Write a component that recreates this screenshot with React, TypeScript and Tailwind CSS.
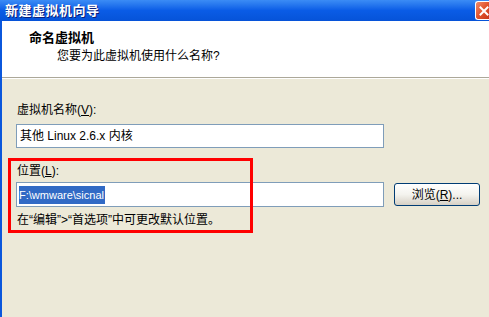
import React from "react";

const font = { fontFamily: '"Liberation Sans", "Noto Sans CJK SC", sans-serif' };

function CloseButton() {
  return (
    <div className="absolute right-0 top-[1px] w-[14px] h-[19px] rounded-l-[3px] border border-r-0 border-white bg-gradient-to-br from-[#f08a6a] via-[#e2542d] to-[#c8361a] flex items-center justify-center">
      <svg width="10" height="10" viewBox="0 0 10 10" className="ml-[2px]">
        <path d="M1.5 1.5 L8.5 8.5 M8.5 1.5 L1.5 8.5" stroke="white" strokeWidth="2" strokeLinecap="square" />
      </svg>
    </div>
  );
}

export default function App() {
  return (
    <div
      className="relative w-[489px] h-[317px] overflow-hidden bg-[#ece9d8] flex flex-col text-black text-[12px]"
      style={font}
    >
      {/* title bar */}
      <div className="relative h-[21px] shrink-0 bg-gradient-to-b from-[#3b8cf5] via-[#0a5ce6] to-[#0653d8] flex items-center pl-[5px]">
        <span className="text-white font-bold text-[13px] leading-none tracking-[0.5px] [text-shadow:1px_1px_0_#0a1f7a]">
          新建虚拟机向导
        </span>
        <CloseButton />
      </div>

      <div className="flex-1 flex flex-col border-l-[2px] border-[#0b57dc]">
        {/* header */}
        <div className="h-[56px] shrink-0 bg-white flex flex-col pl-[27px] pt-[10px]">
          <div className="font-bold text-[13px] leading-[13px]">命名虚拟机</div>
          <div className="pl-[28px] mt-[5px] leading-[14px]">您要为此虚拟机使用什么名称?</div>
        </div>
        <div className="h-[1px] bg-[#aca899]" />
        <div className="h-[1px] bg-white" />

        {/* body */}
        <div className="flex flex-col pl-[14px] pt-[24px]">
          <div className="leading-[14px] pl-[1px]">
            虚拟机名称(<span className="underline">V</span>):
          </div>
          <div className="mt-[7px] w-[368px] h-[24px] border border-[#7f9db9] bg-white flex items-center pl-[3px]">
            其他 Linux 2.6.x 内核
          </div>

          <div className="mt-[16px] leading-[14px] pl-[1px]">
            位置(<span className="underline">L</span>):
          </div>
          <div className="mt-[4px] flex items-center gap-[10px]">
            <div className="w-[368px] h-[25px] border border-[#7f9db9] bg-white flex items-center pl-[2px]">
              <span className="bg-[#316ac5] text-white text-[11px] leading-[18px] pr-[1px]">F:\wmware\sicnal</span>
            </div>
            <button className="w-[86px] h-[23px] rounded-[3px] border border-[#003c74] bg-gradient-to-b from-white via-[#f4f3ee] to-[#d6d0c5] text-[12px] leading-none flex items-center justify-center">
              浏览(<span className="underline">R</span>)...
            </button>
          </div>
          <div className="mt-[6px] leading-[14px] pl-[1px]">
            在“编辑”&gt;“首选项”中可更改默认位置。
          </div>
        </div>
      </div>

      {/* red annotation box */}
      <div className="absolute left-[8px] top-[158px] w-[245px] h-[75px] border-[3px] border-[#ff0000] pointer-events-none" />
    </div>
  );
}
